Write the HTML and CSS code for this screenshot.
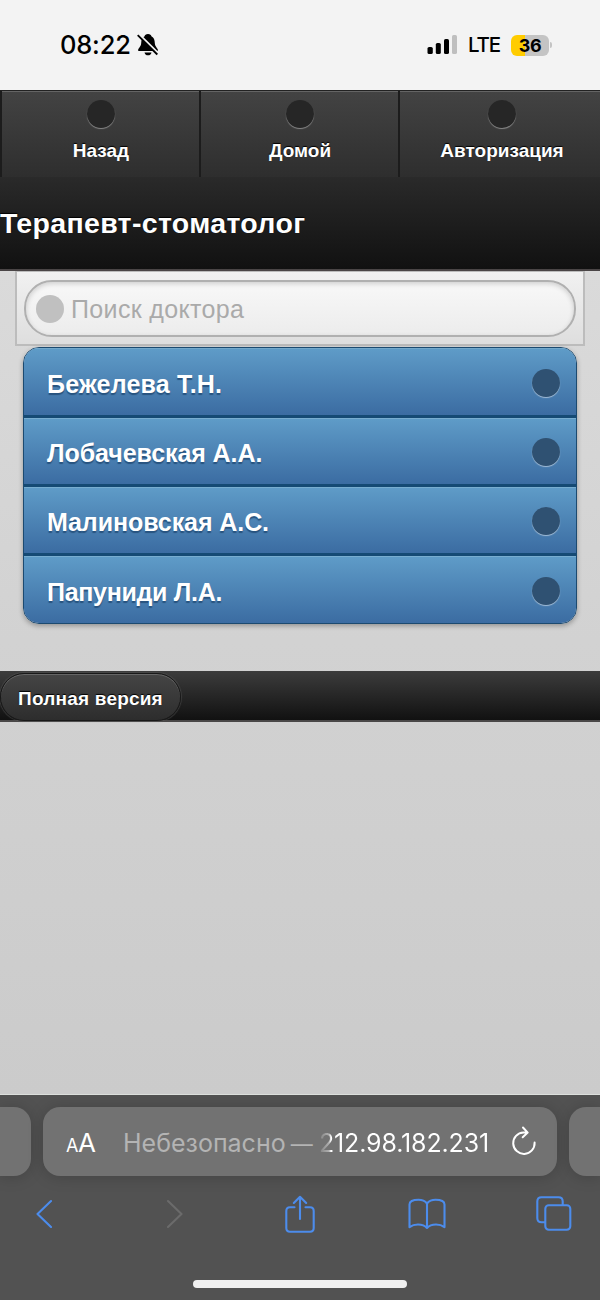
FILE: index.html
```html
<!DOCTYPE html>
<html lang="ru">
<head>
<meta charset="utf-8">
<title>Терапевт-стоматолог</title>
<link rel="stylesheet" href="styles.css">
</head>
<body>
<div class="status">
  <span class="clock">08:22</span>
  <svg class="bell" width="22" height="24" viewBox="0 0 22 24">
    <path d="M11 1C8.800 1 8 2 7.600 3.200C5 4.500 4.300 7 4.200 10C4 13.500 2 14.500 1.200 16.500C.9 17.600 1.300 18 2.400 18H19.600C20.700 18 21.100 17.600 20.800 16.500C20 14.500 18 13.500 17.800 10C17.700 7 17 4.500 14.400 3.200C14 2 13.200 1 11 1Z"/>
    <path d="M7.500 19.500H14.500C14 21.500 12.700 22.300 11 22.300S8 21.500 7.500 19.500Z"/>
    <path d="M1.500 .8L22 21" stroke="#f3f3f3" stroke-width="2.200"/>
    <path d="M.7 2.200L20.300 21.500" stroke="#000" stroke-width="1.800"/>
  </svg>
  <svg class="signal" width="31" height="20" viewBox="0 0 31 20">
    <rect x="0.500" y="12" width="5.300" height="7" rx="1.600"/>
    <rect x="8.800" y="8" width="5" height="11" rx="1.600"/>
    <rect x="17" y="4" width="5" height="15" rx="1.600"/>
    <rect x="25" y="0" width="5" height="19" rx="1.600" fill="#bfbfbf"/>
  </svg>
  <span class="lte">LTE</span>
  <span class="battery">36</span>
  <span class="battery-tip"></span>
</div>
<nav class="nav">
  <a class="nav-item"><i class="dot"></i><span>Назад</span></a>
  <a class="nav-item"><i class="dot"></i><span>Домой</span></a>
  <a class="nav-item last"><i class="dot"></i><span>Авторизация</span></a>
</nav>
<header class="title"><h1>Терапевт-стоматолог</h1></header>
<main class="page">
  <div class="search-wrap">
    <div class="search"><i class="search-dot"></i><span>Поиск доктора</span></div>
  </div>
  <ul class="list">
    <li><span>Бежелева Т.Н.</span><i class="dot"></i></li>
    <li><span>Лобачевская А.А.</span><i class="dot"></i></li>
    <li><span>Малиновская А.С.</span><i class="dot"></i></li>
    <li><span>Папуниди Л.А.</span><i class="dot"></i></li>
  </ul>
  <footer class="footer"><a class="full"><span>Полная версия</span></a></footer>
</main>
<section class="browser">
  <div class="tabs">
    <div class="tab prev"></div>
    <div class="tab current">
      <span class="a-small">A</span><span class="a-big">A</span>
      <span class="insecure">Небезопасно <span class="dash">—</span></span>
      <span class="addr">212.98.182.231</span>
      <svg class="reload" width="26" height="30" viewBox="0 0 26 30" fill="none" stroke="#fff" stroke-width="2" stroke-linecap="round" stroke-linejoin="round">
        <path d="M12.500 6.500A10.700 10.700 0 1 0 23.600 16.600M12 1.500L16.700 6.600L11.700 11.300M16.300 6.600L12.500 6.500"/>
      </svg>
    </div>
    <div class="tab next"></div>
  </div>
  <div class="tools">
    <svg width="16" height="30" viewBox="0 0 16 30"><path d="M15 2L1.500 15L15 28"/></svg>
    <svg class="off" width="16" height="30" viewBox="0 0 16 30"><path d="M1 2L14.500 15L1 28"/></svg>
    <svg width="30" height="38" viewBox="0 0 30 38"><path d="M9.500 12.300H5Q1.300 12.300 1.300 16V33Q1.300 36.700 5 36.700H25Q28.700 36.700 28.700 33V16Q28.700 12.300 25 12.300H20.500M15 24V1.800M8.800 8L15 1.800L21.200 8"/></svg>
    <svg width="38" height="32" viewBox="0 0 38 32"><path d="M19 5.500Q16 1.800 10.500 1.800Q1.500 1.800 1.500 6.500V29.200Q5 26.500 10 26.500Q16 26.500 19 30Q22 26.500 28 26.500Q33 26.500 36.500 29.200V6.500Q36.500 1.800 27.500 1.800Q22 1.800 19 5.500V29.500"/></svg>
    <svg width="36" height="36" viewBox="0 0 36 36"><path d="M9 26.300H5.500Q1.300 26.300 1.300 22V5.500Q1.300 1.300 5.500 1.300H22.500Q26.700 1.300 26.700 5.500V9"/><rect x="9.300" y="9.300" width="25" height="24.500" rx="3.500"/></svg>
  </div>
  <div class="home"></div>
</section>
</body>
</html>
```
FILE: styles.css
```css
* { box-sizing: border-box; }
body {
  margin: 0;
  width: 600px;
  height: 1300px;
  overflow: hidden;
  display: flex;
  flex-direction: column;
  font-family: "Liberation Sans", Arial, sans-serif;
  background: #cecece;
}
.status {
  height: 90px;
  flex: none;
  background: #f3f3f3;
  display: flex;
  align-items: center;
  padding-left: 60px;
  font-family: Inter, sans-serif;
  color: #000;
}
.status > * { flex: none; }
.clock { width: 77px; font-size: 25.5px; font-weight: 550; line-height: 30px; letter-spacing: -0.2px; white-space: nowrap; }
.signal { margin-left: 268px; }
.lte { margin-left: 10px; width: 43px; font-size: 20.5px; font-weight: 500; line-height: 26px; letter-spacing: -1.2px; }
.battery {
  width: 38px;
  height: 21px;
  border-radius: 6px;
  background: linear-gradient(90deg, #ffcc00 38%, #c4c4c4 38%);
  font-size: 18px;
  font-weight: 700;
  line-height: 21px;
  letter-spacing: -0.3px;
  text-align: center;
}
.battery-tip { width: 2px; height: 6px; margin-left: 1px; border-radius: 0 3px 3px 0; background: #c4c4c4; }

.dot {
  display: block;
  flex: none;
  width: 28px;
  height: 28px;
  border-radius: 50%;
  background: #262626;
  box-shadow: 0 1px 1px rgba(255, 255, 255, 0.4);
}
.nav {
  height: 87px;
  flex: none;
  display: grid;
  grid-template-columns: 199px 199px 202px;
  border-top: 1px solid #222;
  background: linear-gradient(#434343, #2e2e2e);
}
.nav-item {
  display: flex;
  flex-direction: column;
  align-items: center;
  padding-top: 9px;
  padding-left: 1px;
  border-left: 2px solid #1c1c1c;
  box-shadow: inset 0 1px 0 #646464;
  color: #fff;
  font-size: 19px;
  font-weight: bold;
  line-height: 22px;
  text-shadow: 0 -1px 1px #000;
}
.nav-item span { margin-top: 12px; }
.nav-item.last { padding-left: 4px; }
.title {
  height: 94px;
  flex: none;
  border-bottom: 2px solid #4a4546;
  background: linear-gradient(#2a2a2a, #111);
}
.title h1 {
  margin: 0;
  padding-top: 30px;
  font-size: 28.5px;
  line-height: 32px;
  letter-spacing: 0.33px;
  color: #fff;
  white-space: nowrap;
  text-shadow: 0 -1px 1px #000;
}
.page {
  flex: 1;
  border-bottom: 1px solid #dcdfdc;
  background: linear-gradient(#dadada, #d2d2d2 45%, #cbcbcb);
}
.search-wrap {
  margin: 0 15px;
  height: 75px;
  padding: 8px 7px 7px;
  border: 2px solid #bcbcbc;
  border-top-width: 1px;
  background: linear-gradient(#f1f1f1, #dedede);
}
.search {
  height: 57px;
  display: flex;
  align-items: center;
  padding-left: 10px;
  gap: 7px;
  border: 2px solid #b0b0b0;
  border-radius: 28px;
  background: linear-gradient(#f8f8f8, #ececec);
  box-shadow: inset 0 2px 5px rgba(0, 0, 0, 0.16);
  font-size: 25px;
  line-height: 30px;
  letter-spacing: 0.35px;
  color: #aaa;
}
.search-dot { width: 28px; height: 28px; border-radius: 50%; background: #c0c0c0; }
.list {
  list-style: none;
  margin: 1px 23px 0;
  padding: 0;
  height: 277px;
  display: grid;
  grid-template-rows: 67px 69px 69px 70px;
  border: 1px solid #1c4a70;
  border-radius: 16px;
  overflow: hidden;
  box-shadow: 0 2px 5px rgba(0, 0, 0, 0.3);
}
.list li {
  display: flex;
  align-items: center;
  justify-content: space-between;
  padding: 2px 16px 0 23px;
  background: linear-gradient(#5f9cc8, #3b6ca2);
  box-shadow: inset 0 1px 0 #73a9cc;
  color: #fff;
  font-size: 25px;
  font-weight: bold;
  line-height: 30px;
  letter-spacing: -0.08px;
  text-shadow: 0 2px 1px #27537f;
}
.list li:first-child { letter-spacing: 0.2px; }
.list li:last-child { letter-spacing: -0.3px; }
.list li + li { border-top: 3px solid #154a74; box-shadow: inset 0 1px 0 #78add0; }
.list span { padding-top: 2px; }
.list .dot { background: #2f5172; box-shadow: 0 1px 1px rgba(255, 255, 255, 0.5); }
.footer {
  margin-top: 47px;
  height: 51px;
  padding: 2px 0 0;
  border-bottom: 2px solid #4a4848;
  background: linear-gradient(#3c3c3c, #111);
}
.full {
  display: flex;
  align-items: center;
  justify-content: center;
  width: 181px;
  height: 48px;
  padding-top: 4px;
  border: 1px solid #191919;
  border-radius: 25px;
  background: linear-gradient(#454545, #2d2d2d);
  box-shadow: inset 0 1px 0 #666, 0 0 1px 1px rgba(90, 90, 90, 0.45);
  color: #fff;
  font-size: 19px;
  font-weight: bold;
  line-height: 22px;
  letter-spacing: 0.2px;
  text-shadow: 0 -1px 1px #000;
}

.browser {
  height: 205px;
  flex: none;
  background: #525252;
  padding-top: 12px;
  overflow: hidden;
}
.tabs { display: grid; grid-template-columns: 31px 514px 31px; column-gap: 12px; }
.tab { height: 69px; background: #727272; box-shadow: 0 1px 16px rgba(0, 0, 0, 0.18); }
.prev { border-radius: 0 17px 17px 0; }
.next { border-radius: 17px 0 0 17px; }
.current {
  border-radius: 17px;
  display: flex;
  align-items: baseline;
  padding: 21px 0 0 23px;
  font-family: Inter, sans-serif;
  color: #fff;
  font-size: 25px;
  line-height: 30px;
  white-space: nowrap;
}
.current > * { flex: none; }
.a-small { width: 12px; font-size: 18px; }
.a-big { width: 45px; font-size: 26px; }
.insecure { width: 196px; color: #b4b4b4; }
.dash { margin-left: -2px; font-size: 22px; }
.addr {
  width: 172px;
  color: transparent;
  letter-spacing: -0.15px;
  background: linear-gradient(90deg, #808080, #b0b0b0 10px, #fff 12px);
  background-clip: text;
  -webkit-background-clip: text;
}
.reload { align-self: flex-start; margin: -2px 0 0 20px; }
.tools {
  height: 38px;
  margin-top: 19px;
  padding: 0 28px 0 36px;
  display: flex;
  align-items: center;
}
.tools svg { fill: none; stroke: #4c8cec; stroke-width: 2.1; stroke-linecap: round; stroke-linejoin: round; flex: none; }
.tools .off { stroke: #6b6b6b; margin: 0 102px 0 115px; }
.tools svg:nth-child(4) { margin: 0 90px 0 93px; }
.home { width: 214px; height: 8px; margin: 47px auto 0; border-radius: 4px; background: #f0f0f0; }
```
